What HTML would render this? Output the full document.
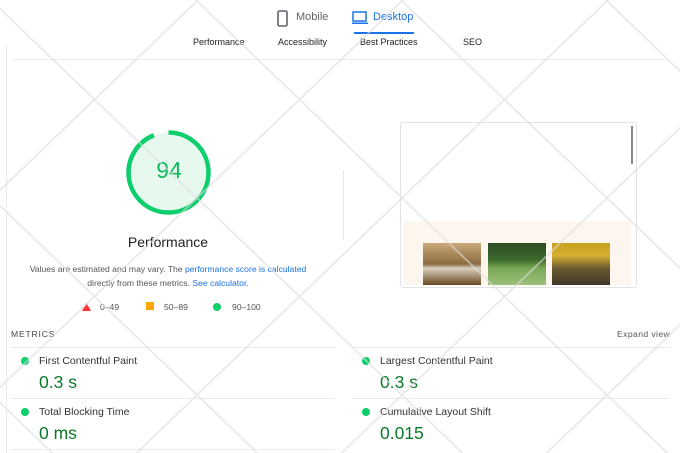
<!DOCTYPE html>
<html><head><meta charset="utf-8"><style>
*{margin:0;padding:0;box-sizing:border-box}
body{width:680px;height:453px;overflow:hidden;background:#fff;font-family:"Liberation Sans",sans-serif;position:relative;color:#212121}
.a{position:absolute;white-space:nowrap}
.sub{font-size:9px;color:#202124;top:37px}
.lab{font-size:10.5px;color:#333}
.val{font-size:17.5px;color:#0a7a28}
.dot{width:8px;height:8px;border-radius:50%;background:#0cce6b;position:absolute}
.hl{position:absolute;height:1px;background:#ebebeb}
</style></head><body>
<svg class="a" style="left:277px;top:10px" width="12" height="17"><rect x="1" y="1" width="9" height="15" rx="1.5" fill="none" stroke="#5f6368" stroke-width="1.6"/></svg>
<div class="a" style="left:296px;top:11px;font-size:11px;color:#5f6368">Mobile</div>
<svg class="a" style="left:352px;top:11px" width="16" height="14"><rect x="1" y="1" width="13" height="9" fill="none" stroke="#1a73e8" stroke-width="1.5"/><rect x="0" y="11.5" width="16" height="1.5" fill="#1a73e8"/></svg>
<div class="a" style="left:373px;top:11px;font-size:11px;color:#1a73e8">Desktop</div>
<div class="a" style="left:354px;top:32px;width:60px;height:2px;background:#1a73e8"></div>
<div class="a sub" style="left:193px">Performance</div>
<div class="a sub" style="left:278px">Accessibility</div>
<div class="a sub" style="left:360px">Best Practices</div>
<div class="a sub" style="left:463px">SEO</div>
<div class="hl" style="left:12px;top:59px;width:653px"></div>
<div class="a" style="left:6px;top:45px;width:1px;height:408px;background:#ebebeb"></div>
<svg class="a" style="left:124px;top:128px" width="90" height="90">
<circle cx="44.5" cy="44.5" r="40" fill="#e7f9ef"/>
<circle cx="44.5" cy="44.5" r="40" fill="none" stroke="#0cce6b" stroke-width="4.5" stroke-dasharray="236 15.3" transform="rotate(-90 44.5 44.5)"/>
</svg>
<div class="a" style="left:124px;top:157px;width:90px;text-align:center;font-size:23px;color:#0cba5a">94</div>
<div class="a" style="left:78px;top:234px;width:180px;text-align:center;font-size:14px;color:#222">Performance</div>
<div class="a" style="left:0;top:262px;width:336px;text-align:center;font-size:8.6px;color:#555;line-height:14px">Values are estimated and may vary. The <span style="color:#1a73e8">performance score is calculated</span><br>directly from these metrics. <span style="color:#1a73e8">See calculator.</span></div>
<svg class="a" style="left:82px;top:303px" width="9" height="8"><polygon points="4.5,0 9,8 0,8" fill="#f33"/></svg>
<div class="a" style="left:100px;top:302px;font-size:8.6px;color:#555">0–49</div>
<div class="a" style="left:146px;top:302px;width:8px;height:8px;background:#ffa400"></div>
<div class="a" style="left:164px;top:302px;font-size:8.6px;color:#555">50–89</div>
<div class="dot" style="left:213px;top:303px"></div>
<div class="a" style="left:232px;top:302px;font-size:8.6px;color:#555">90–100</div>
<div class="a" style="left:343px;top:170px;width:1px;height:70px;background:#e8e8e8"></div>
<div class="a" style="left:400px;top:122px;width:237px;height:166px;border:1px solid #e3e3e3;border-radius:3px;background:#fff"></div>
<div class="a" style="left:631px;top:126px;width:2px;height:38px;background:#888"></div>
<div class="a" style="left:403px;top:221px;width:228px;height:64px;background:#fdf6ee"></div>
<div class="a" style="left:423px;top:243px;width:58px;height:42px;background:linear-gradient(#c9a978,#8a6a40 50%,#d8cfc0 60%,#6a4a20)"></div>
<div class="a" style="left:488px;top:243px;width:58px;height:42px;background:linear-gradient(#2c4a22,#3c6a2c 40%,#7aa858 60%,#9cbf7a)"></div>
<div class="a" style="left:552px;top:243px;width:58px;height:42px;background:linear-gradient(#c8a020,#d8b030 30%,#6a5a30 60%,#40382a)"></div>
<div class="a" style="left:11px;top:329px;font-size:8.6px;letter-spacing:.8px;color:#444">METRICS</div>
<div class="a" style="left:617px;top:329px;font-size:8.6px;letter-spacing:.4px;color:#555">Expand view</div>
<div class="hl" style="left:11px;top:347px;width:324px"></div>
<div class="hl" style="left:352px;top:347px;width:318px"></div>
<div class="hl" style="left:11px;top:398px;width:324px"></div>
<div class="hl" style="left:352px;top:398px;width:318px"></div>
<div class="hl" style="left:11px;top:449px;width:324px"></div>
<div class="dot" style="left:21px;top:357px"></div><div class="a lab" style="left:39px;top:355px">First Contentful Paint</div><div class="a val" style="left:39px;top:372px">0.3 s</div>
<div class="dot" style="left:21px;top:408px"></div><div class="a lab" style="left:39px;top:406px">Total Blocking Time</div><div class="a val" style="left:39px;top:423px">0 ms</div>
<div class="dot" style="left:362px;top:357px"></div><div class="a lab" style="left:380px;top:355px">Largest Contentful Paint</div><div class="a val" style="left:380px;top:372px">0.3 s</div>
<div class="dot" style="left:362px;top:408px"></div><div class="a lab" style="left:380px;top:406px">Cumulative Layout Shift</div><div class="a val" style="left:380px;top:423px">0.015</div>
<svg class="a" style="left:0;top:0" width="680" height="453">
<defs><pattern id="p" width="205" height="197" patternUnits="userSpaceOnUse" x="-8" y="1">
<path d="M0 0L205 197M205 0L0 197" stroke="#dcdcdc" stroke-width="1.8" fill="none"/>
</pattern></defs>
<rect width="680" height="453" fill="url(#p)" opacity=".6"/>
</svg>
</body></html>
